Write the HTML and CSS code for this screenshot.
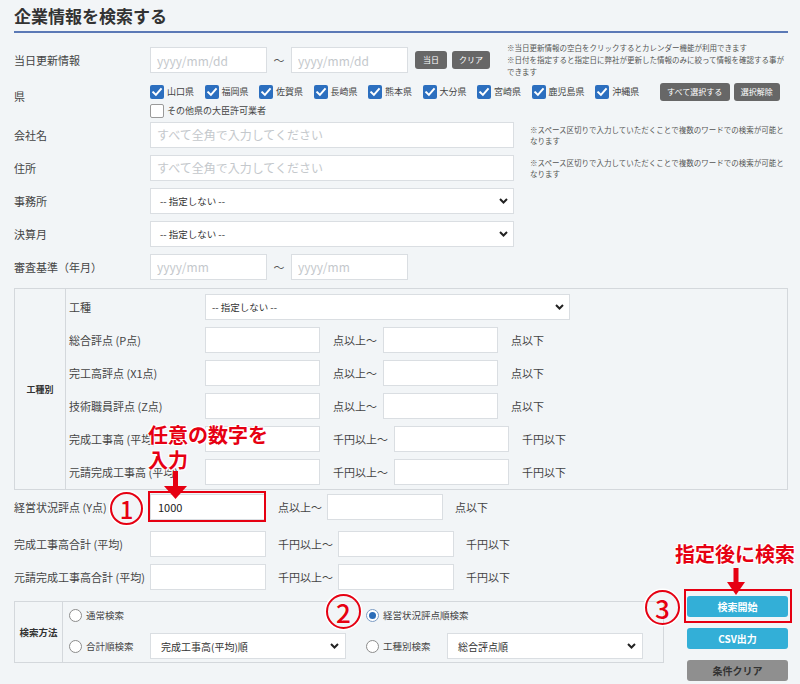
FILE: index.html
```html
<!DOCTYPE html>
<html lang="ja">
<head>
<meta charset="utf-8">
<title>企業情報を検索する</title>
<link rel="stylesheet" href="styles.css">
</head>
<body>
<div class="page">
  <h1 class="title">企業情報を検索する</h1>

  <div class="row row-date">
    <div class="label">当日更新情報</div>
    <div class="field">
      <input class="inp w117" placeholder="yyyy/mm/dd">
      <span class="tilde">〜</span>
      <input class="inp w117" placeholder="yyyy/mm/dd">
      <button class="btn-dark btn-today">当日</button>
      <button class="btn-dark btn-clr">クリア</button>
      <p class="note note-date">※当日更新情報の空白をクリックするとカレンダー機能が利用できます<br>※日付を指定すると指定日に弊社が更新した情報のみに絞って情報を確認する事が<br>できます</p>
    </div>
  </div>

  <div class="row row-pref">
    <div class="label label-top">県</div>
    <div class="pref-area">
      <div class="cbs">
        <label class="cb"><span class="box"><svg viewBox="0 0 14 14"><path d="M3.2 7.3 L5.9 9.9 L10.9 4.2"/></svg></span>山口県</label>
        <label class="cb"><span class="box"><svg viewBox="0 0 14 14"><path d="M3.2 7.3 L5.9 9.9 L10.9 4.2"/></svg></span>福岡県</label>
        <label class="cb"><span class="box"><svg viewBox="0 0 14 14"><path d="M3.2 7.3 L5.9 9.9 L10.9 4.2"/></svg></span>佐賀県</label>
        <label class="cb"><span class="box"><svg viewBox="0 0 14 14"><path d="M3.2 7.3 L5.9 9.9 L10.9 4.2"/></svg></span>長崎県</label>
        <label class="cb"><span class="box"><svg viewBox="0 0 14 14"><path d="M3.2 7.3 L5.9 9.9 L10.9 4.2"/></svg></span>熊本県</label>
        <label class="cb"><span class="box"><svg viewBox="0 0 14 14"><path d="M3.2 7.3 L5.9 9.9 L10.9 4.2"/></svg></span>大分県</label>
        <label class="cb"><span class="box"><svg viewBox="0 0 14 14"><path d="M3.2 7.3 L5.9 9.9 L10.9 4.2"/></svg></span>宮崎県</label>
        <label class="cb"><span class="box"><svg viewBox="0 0 14 14"><path d="M3.2 7.3 L5.9 9.9 L10.9 4.2"/></svg></span>鹿児島県</label>
        <label class="cb"><span class="box"><svg viewBox="0 0 14 14"><path d="M3.2 7.3 L5.9 9.9 L10.9 4.2"/></svg></span>沖縄県</label>
        <button class="btn-dark btn-all">すべて選択する</button>
        <button class="btn-dark btn-none">選択解除</button>
      </div>
      <div class="cbs cbs2">
        <label class="cb"><span class="box off"></span>その他県の大臣許可業者</label>
      </div>
    </div>
  </div>

  <div class="row row-std">
    <div class="label">会社名</div>
    <div class="field">
      <input class="inp w364 ph-wide" placeholder="すべて全角で入力してください">
      <p class="note note-side">※スペース区切りで入力していただくことで複数のワードでの検索が可能と<br>なります</p>
    </div>
  </div>

  <div class="row row-std">
    <div class="label">住所</div>
    <div class="field">
      <input class="inp w364 ph-wide" placeholder="すべて全角で入力してください">
      <p class="note note-side">※スペース区切りで入力していただくことで複数のワードでの検索が可能と<br>なります</p>
    </div>
  </div>

  <div class="row row-std">
    <div class="label">事務所</div>
    <div class="field">
      <div class="sel w364"><span>-- 指定しない --</span><svg viewBox="0 0 9 6"><path d="M1 1 L4.5 4.5 L8 1"/></svg></div>
    </div>
  </div>

  <div class="row row-std">
    <div class="label">決算月</div>
    <div class="field">
      <div class="sel w364"><span>-- 指定しない --</span><svg viewBox="0 0 9 6"><path d="M1 1 L4.5 4.5 L8 1"/></svg></div>
    </div>
  </div>

  <div class="row row-std">
    <div class="label">審査基準（年月）</div>
    <div class="field">
      <input class="inp w117" placeholder="yyyy/mm">
      <span class="tilde">〜</span>
      <input class="inp w117" placeholder="yyyy/mm">
    </div>
  </div>

  <div class="kbox">
    <div class="kbox-head">工種別</div>
    <div class="kbox-body">
      <div class="row row-std">
        <div class="label">工種</div>
        <div class="field">
          <div class="sel w365 sel-k"><span>-- 指定しない --</span><svg viewBox="0 0 9 6"><path d="M1 1 L4.5 4.5 L8 1"/></svg></div>
        </div>
      </div>
      <div class="row row-std">
        <div class="label">総合評点 (P点)</div>
        <div class="field">
          <input class="inp w115"><span class="unit unit-k">点以上〜</span><input class="inp w115"><span class="unit unit-k">点以下</span>
        </div>
      </div>
      <div class="row row-std">
        <div class="label">完工高評点 (X1点)</div>
        <div class="field">
          <input class="inp w115"><span class="unit unit-k">点以上〜</span><input class="inp w115"><span class="unit unit-k">点以下</span>
        </div>
      </div>
      <div class="row row-std">
        <div class="label">技術職員評点 (Z点)</div>
        <div class="field">
          <input class="inp w115"><span class="unit unit-k">点以上〜</span><input class="inp w115"><span class="unit unit-k">点以下</span>
        </div>
      </div>
      <div class="row row-std">
        <div class="label">完成工事高 (平均)</div>
        <div class="field">
          <input class="inp w115"><span class="unit unit-k">千円以上〜</span><input class="inp w115"><span class="unit unit-k">千円以下</span>
        </div>
      </div>
      <div class="row row-std">
        <div class="label">元請完成工事高 (平均)</div>
        <div class="field">
          <input class="inp w115"><span class="unit unit-k">千円以上〜</span><input class="inp w115"><span class="unit unit-k">千円以下</span>
        </div>
      </div>
    </div>
  </div>

  <div class="row row-std row-y">
    <div class="label">経営状況評点 (Y点)</div>
    <div class="field">
      <input class="inp w116 val" value="1000"><span class="unit">点以上〜</span><input class="inp w116"><span class="unit">点以下</span>
    </div>
  </div>

  <div class="row row-std">
    <div class="label">完成工事高合計 (平均)</div>
    <div class="field">
      <input class="inp w116"><span class="unit">千円以上〜</span><input class="inp w116"><span class="unit">千円以下</span>
    </div>
  </div>

  <div class="row row-std">
    <div class="label">元請完成工事高合計 (平均)</div>
    <div class="field">
      <input class="inp w116"><span class="unit">千円以上〜</span><input class="inp w116"><span class="unit">千円以下</span>
    </div>
  </div>

  <div class="bottom">
    <div class="sbox">
      <div class="sbox-head">検索方法</div>
      <div class="sbox-body">
        <div class="opt"><span class="radio"></span><span class="opt-label">通常検索</span></div>
        <div class="opt"><span class="radio on"></span><span class="opt-label">経営状況評点順検索</span></div>
        <div class="opt"><span class="radio"></span><span class="opt-label">合計順検索</span><div class="sel w196 sel-s"><span>完成工事高(平均)順</span><svg viewBox="0 0 9 6"><path d="M1 1 L4.5 4.5 L8 1"/></svg></div></div>
        <div class="opt"><span class="radio"></span><span class="opt-label">工種別検索</span><div class="sel w196 sel-s"><span>総合評点順</span><svg viewBox="0 0 9 6"><path d="M1 1 L4.5 4.5 L8 1"/></svg></div></div>
      </div>
    </div>
    <div class="actions">
      <button class="btn">検索開始</button>
      <button class="btn">CSV出力</button>
      <button class="btn gray">条件クリア</button>
    </div>
  </div>

  <div class="anno anno-1">任意の数字を<br>入力</div>
  <svg class="arrow arrow-1" viewBox="0 0 23 28"><rect x="9" y="0" width="5" height="16"/><polygon points="0,15 23,15 11.5,28"/></svg>
  <div class="redbox redbox-1"></div>
  <div class="num num-1">1</div>

  <div class="num num-2">2</div>

  <div class="anno anno-3">指定後に検索</div>
  <svg class="arrow arrow-3" viewBox="0 0 18 27"><rect x="6.5" y="0" width="5" height="15"/><polygon points="0,14 18,14 9,27"/></svg>
  <div class="redbox redbox-3"></div>
  <div class="num num-3">3</div>
</div>
</body>
</html>
```

FILE: styles.css
```css
* { box-sizing: border-box; }
html, body { margin: 0; padding: 0; }
body {
  background: #f2f5f7;
  font-family: "Noto Sans CJK JP", "Noto Sans", sans-serif;
  color: #444;
  width: 800px;
  height: 684px;
  overflow: hidden;
}
.page { position: relative; padding: 0 12px 0 14px; }

.title {
  margin: 0;
  padding: 4px 0 3px;
  font-size: 17px;
  line-height: 24px;
  font-weight: 700;
  color: #333;
  border-bottom: 2px solid #5b79b6;
}

.row { display: grid; grid-template-columns: 136px 1fr; align-items: center; }
.row-std { height: 33px; }
.row-date { margin-top: 9px; }
.row-pref { margin-top: 5px; align-items: start; }
.row-y { margin-bottom: 4px; }

.label { font-size: 11px; line-height: 14px; color: #444; white-space: nowrap; }
.label-top { margin-top: 6px; }

.field { display: flex; align-items: center; }

.inp {
  height: 26px;
  border: 1px solid #dadee2;
  background: #fff;
  padding: 0 0 0 6px;
  margin: 0;
  font-family: "Noto Sans CJK JP", sans-serif;
  font-size: 12px;
  color: #222;
  outline: none;
  border-radius: 0;
}
.inp::placeholder { color: #c4c8cc; }
.inp.val { font-size: 11px; padding-left: 7px; }
.w115 { width: 115px; }
.w116 { width: 116px; }
.w117 { width: 117px; }
.w196 { width: 196px; }
.w364 { width: 364px; }
.w365 { width: 365px; }

.tilde { width: 24px; text-align: center; font-size: 11px; color: #555; }

.note { margin: 0; font-size: 7.5px; line-height: 12px; color: #555; white-space: nowrap; }
.note-date { margin-left: 17px; }
.note-side { margin-left: 16px; line-height: 11px; }

.btn-dark {
  height: 18px;
  padding: 0 7px;
  margin: 0;
  border: none;
  border-radius: 3px;
  background: #676767;
  color: #fff;
  font-family: "Noto Sans CJK JP", sans-serif;
  font-size: 8px;
  line-height: 18px;
}
.btn-today { margin-left: 7px; width: 32px; padding: 0; }
.btn-clr { margin-left: 5px; width: 38px; padding: 0; }
.btn-all { margin-left: 10px; width: 70px; padding: 0; }
.btn-none { margin-left: 4px; width: 46px; padding: 0; }

.cbs { display: flex; align-items: center; height: 18px; }
.cbs2 { margin-top: 3px; height: 14px; }
.cb { display: flex; align-items: center; margin-right: 10.5px; font-size: 9px; line-height: 14px; color: #444; white-space: nowrap; }
.box {
  width: 14px; height: 14px;
  border-radius: 2px;
  background: #2c6fbf;
  margin-right: 3px;
  display: flex; align-items: center; justify-content: center;
  flex: none;
}
.box svg { width: 14px; height: 14px; }
.box path { fill: none; stroke: #fff; stroke-width: 2; stroke-linecap: square; }
.box.off { background: #fff; border: 1px solid #9a9a9a; }

.sel {
  height: 26px;
  border: 1px solid #dadee2;
  background: #fff;
  display: flex; align-items: center; justify-content: space-between;
  padding: 0 5px 0 9px;
  font-size: 9.5px;
  color: #333;
  white-space: nowrap;
}
.sel svg { width: 9px; height: 6px; flex: none; }
.sel path { fill: none; stroke: #222; stroke-width: 2; }
.sel-k { padding-left: 6px; }
.sel-s { padding-left: 10px; font-size: 10px; padding-right: 6px; }

.unit { font-size: 11px; margin: 0 5px 0 12px; color: #444; white-space: nowrap; }
.unit-k { margin: 0 6px 0 13px; }

.kbox { margin-top: 5px; border: 1px solid #d4d8dc; display: flex; }
.kbox-head {
  width: 51px;
  border-right: 1px solid #d4d8dc;
  display: flex; align-items: center; justify-content: center;
  font-size: 9px; font-weight: 700; color: #333;
}
.kbox-body { flex: 1; padding: 1px 0 1px 3px; }

.bottom { display: flex; align-items: flex-start; margin-top: 3px; }
.sbox { width: 650px; margin-top: 5px; border: 1px solid #d4d8dc; display: flex; }
.sbox-head {
  width: 48px;
  border-right: 1px solid #d4d8dc;
  display: flex; align-items: center; justify-content: center;
  font-size: 9.5px; font-weight: 700; color: #333;
}
.sbox-body {
  flex: 1;
  display: grid;
  grid-template-columns: 297px auto;
  grid-template-rows: 16px 26px;
  row-gap: 10px;
  padding: 5px 20px 3px 6px;
}
.opt { display: flex; align-items: center; }
.radio {
  width: 13px; height: 13px;
  border-radius: 50%;
  border: 1px solid #8c8c8c;
  background: #fff;
  flex: none;
  display: flex; align-items: center; justify-content: center;
}
.radio.on { border-color: #7c9cc4; }
.radio.on::after { content: ""; width: 7px; height: 7px; border-radius: 50%; background: #2b6cb8; }
.opt-label { margin-left: 4px; width: 64px; font-size: 9.5px; color: #444; white-space: nowrap; }

.actions { margin-left: 23px; width: 102px; display: flex; flex-direction: column; gap: 11px; }
.btn {
  height: 21px;
  margin: 0;
  border: none;
  border-radius: 3px;
  background: #33afd7;
  color: #fff;
  font-family: "Noto Sans CJK JP", sans-serif;
  font-weight: 700;
  font-size: 10px;
}
.btn.gray { background: #8f8f8f; color: #333; }

/* annotation overlays */
.anno {
  position: absolute;
  color: #e60012;
  font-weight: 700;
  font-size: 20px;
  line-height: 25px;
  white-space: nowrap;
  text-shadow: 1px 1px 0 #fff, -1px -1px 0 #fff, 1px -1px 0 #fff, -1px 1px 0 #fff, 0 0 3px #fff;
}
.anno-1 { left: 148px; top: 422px; }
.anno-3 { left: 675px; top: 541px; }

.arrow { position: absolute; fill: #e60012; }
.arrow-1 { left: 164px; top: 471px; width: 23px; height: 28px; }
.arrow-3 { left: 727px; top: 568px; width: 18px; height: 27px; }

.redbox { position: absolute; border: 2px solid #e60012; }
.redbox-1 { left: 148px; top: 491px; width: 118px; height: 31px; }
.redbox-3 { left: 684px; top: 589px; width: 108px; height: 34px; }

.num {
  position: absolute;
  border: 2.5px solid #e60012;
  border-radius: 50%;
  color: #e60012;
  font-weight: 500;
  display: flex; align-items: center; justify-content: center;
  box-shadow: 0 0 0 1.5px #fff;
  text-shadow: 0 0 2px #fff;
}
.num-1 { left: 110px; top: 492px; width: 33px; height: 33px; font-size: 24px; }
.num-2 { left: 326px; top: 594px; width: 35px; height: 35px; font-size: 26px; }
.num-3 { left: 645px; top: 590px; width: 35px; height: 35px; font-size: 26px; }
```
